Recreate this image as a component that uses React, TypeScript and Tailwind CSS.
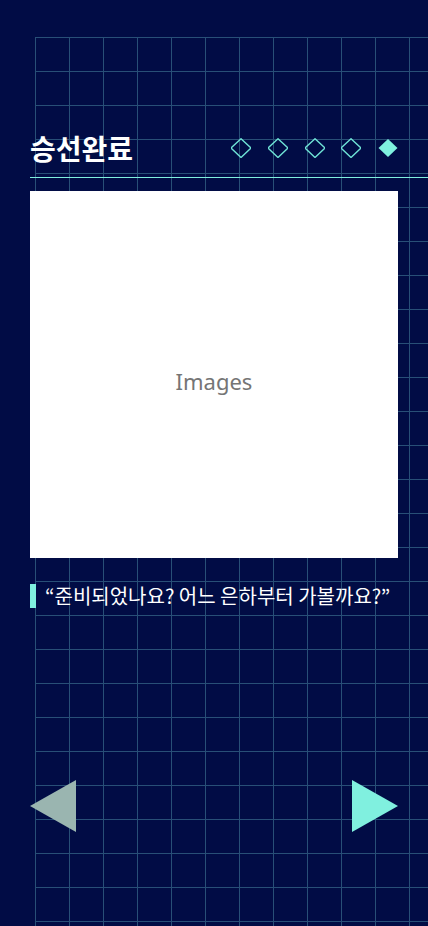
import React from "react";

function Diamond({ filled }: { filled?: boolean }) {
  return (
    <svg width="20" height="20" viewBox="0 0 20 20" className="block">
      {filled ? (
        <polygon points="10,1 19.5,10 10,19 0.5,10" fill="#7ff0df" />
      ) : (
        <polygon points="10,0.8 20,10 10,19.5 0,10" fill="none" stroke="#6fe3d6" strokeWidth="1.4" />
      )}
    </svg>
  );
}

export default function App() {
  return (
    <div className="relative w-[428px] h-[926px] overflow-hidden bg-[#010c45] font-['Noto_Sans_CJK_KR','Noto_Sans',sans-serif]">
      <div
        aria-hidden
        className="absolute left-[35px] top-[37px] right-0 bottom-0 bg-[linear-gradient(to_right,#284f77_1px,transparent_1px),linear-gradient(to_bottom,#284f77_1px,transparent_1px)] bg-[size:34px_34px]"
      />
      <div className="relative flex flex-col pl-[30px] pt-[133px]">
        <div className="flex items-center justify-between pr-[30px] h-[30px]">
          <h1 className="text-[28px] leading-[30px] font-bold text-white">승선완료</h1>
          <div className="flex items-center gap-[16.75px]">
            <Diamond />
            <Diamond />
            <Diamond />
            <Diamond />
            <Diamond filled />
          </div>
        </div>
        <div className="mt-[14px] h-px bg-[#7ff0df]" />
        <div className="mt-[13px] w-[368px] h-[367px] bg-white flex items-center justify-center">
          <span className="mt-[14px] text-[22px] text-[#757575] font-['Noto_Sans',sans-serif]">Images</span>
        </div>
        <div className="mt-[26px] flex items-center gap-[9px] h-[24px]">
          <div className="w-[6px] h-[24px] bg-[#7ff0df]" />
          <p className="text-[20px] leading-[24px] text-white whitespace-nowrap">“준비되었나요? 어느 은하부터 가볼까요?”</p>
        </div>
        <div className="mt-[172px] flex items-center justify-between pr-[30px]">
          <svg width="46" height="52" viewBox="0 0 46 52" className="block">
            <polygon points="46,0 46,52 0,26" fill="#9ab5b0" />
          </svg>
          <svg width="46" height="52" viewBox="0 0 46 52" className="block">
            <polygon points="0,0 0,52 46,26" fill="#80f0df" />
          </svg>
        </div>
      </div>
    </div>
  );
}
